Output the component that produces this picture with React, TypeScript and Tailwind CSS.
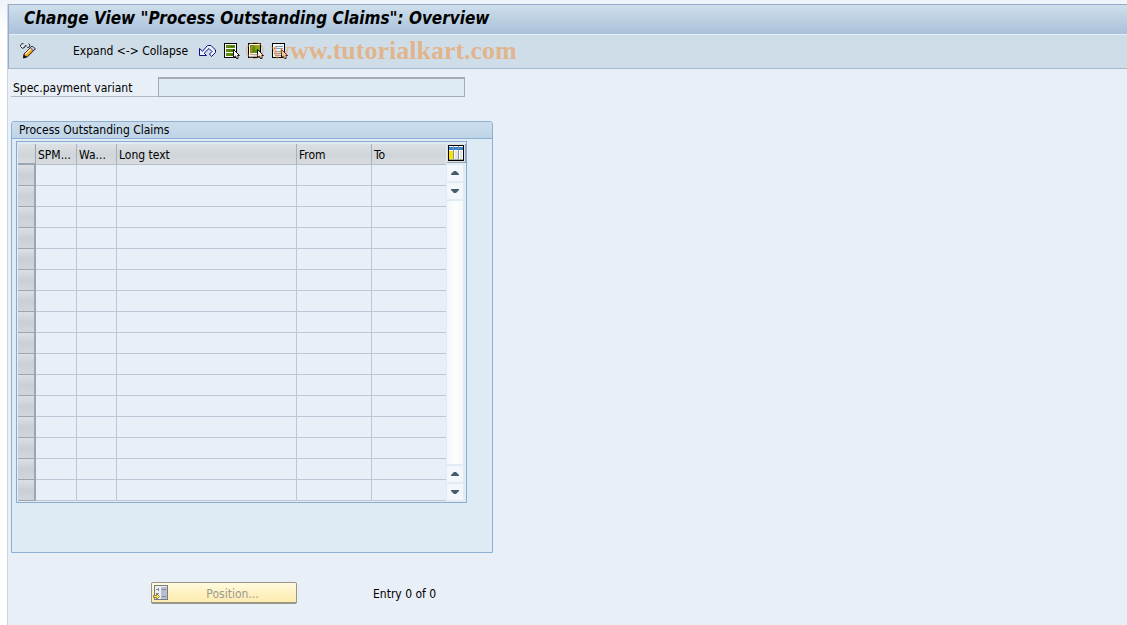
import type { ReactNode } from 'react';

const columns = [
  { label: 'SPM...', width: 'w-[41px]' },
  { label: 'Wa...', width: 'w-[40px]' },
  { label: 'Long text', width: 'w-[180px]' },
  { label: 'From', width: 'w-[75px]' },
  { label: 'To', width: 'w-[74px]' }
];

const rows = Array.from({ length: 16 }, (_, i) => i);

function Glyph({ children }: { children: ReactNode }) {
  return (
    <svg className="block size-4" viewBox="0 0 16 16" shapeRendering="crispEdges" aria-hidden="true">
      {children}
    </svg>
  );
}

function EditIcon() {
  return (
    <svg className="block size-4" viewBox="0 0 16 16" fill="none" aria-hidden="true">
      <path d="M.5 3.5V2L2 .7L3.5 .7M1 4L2.5 5.3L4.5 4.5L5 2.8L6.5 2.8L7.5 4.5L9.5 4L10 2L8.5 .7" stroke="#23282d" strokeWidth="1" />
      <path d="M1.5 3.5L3.5 2.5M6.5 3.8L8.5 2.5" stroke="#fff" />
      <path d="M4 11L11.5 3.5L15.2 6L7.5 13.7L3.5 15Z" fill="#f9a11b" stroke="#16161c" />
      <path d="M5.3 11.3L12 4.6" stroke="#ffe9b0" strokeWidth="1.6" />
      <path d="M10.3 4.7L12 3L15.3 5.6L13.2 7.7Z" fill="#c7cbe8" stroke="#25253a" strokeWidth=".8" />
      <path d="M4 11.8L6.8 14L3.2 15.2Z" fill="#111" />
    </svg>
  );
}

function UndoIcon() {
  return (
    <svg className="block h-4 w-[17px]" viewBox="0 0 17 16" fill="none" aria-hidden="true">
      <path
        d="M.5 5.5V12.5H7.5L5.2 10.2L10 5.5L13 8.5L10.5 11L12.5 13.5L16.5 9.5V7L12 2.5H8.5L3.5 8.3Z"
        fill="#eef3fb"
        stroke="#10108c"
        strokeWidth="1"
      />
    </svg>
  );
}

function Cursor() {
  return (
    <path
      d="M9.5 6.5V14.5L11.5 13L12.5 15.5H14V13.5L13.5 12.5H15.5Z"
      fill="#fff"
      stroke="#111"
      strokeWidth="1"
      shapeRendering="auto"
    />
  );
}

function SelectAllIcon() {
  return (
    <Glyph>
      <path d="M.5.5H12.5V14.5H.5Z" fill="#fff" stroke="#000" />
      <path d="M2 2H11V5H2ZM2 6H11V9H2ZM2 10H11V13H2Z" fill="#5c8a0a" />
      <path d="M7 3H10V4H7ZM7 7H10V8H7ZM7 11H10V12H7Z" fill="#3f6b00" />
      <Cursor />
    </Glyph>
  );
}

function SelectBlockIcon() {
  return (
    <Glyph>
      <path d="M.5.5H12.5V14.5H.5Z" fill="#fff" stroke="#000" />
      <path d="M2 2H12V10H2Z" fill="#5c8a0a" />
      <path d="M7 2H12V7H7Z" fill="#83a90f" />
      <path d="M2 11H9V12H2ZM2 13H9V14H2Z" fill="#9db2c4" />
      <Cursor />
    </Glyph>
  );
}

function DeselectIcon() {
  return (
    <Glyph>
      <path d="M.5.5H12.5V14.5H.5Z" fill="#f2f7fb" stroke="#000" />
      <path d="M3 3H11V4H3ZM2 5H11V6H2ZM3 8H11V9H3ZM2 10H9V11H2ZM3 12H9V13H3Z" fill="#7f9db5" />
      <Cursor />
    </Glyph>
  );
}

function ColumnsIcon() {
  return (
    <Glyph>
      <path d="M0 0H16V16H0Z" fill="#000" />
      <path d="M1 1H15V15H1Z" fill="#fff" />
      <path d="M1 2H15V5H1Z" fill="#3484c8" />
      <path d="M1 6H5V14H1Z" fill="#ffe100" />
      <path d="M5 1H6V15H5ZM10 1H11V15H10Z" fill="#8a939b" />
      <path d="M7 6H10V14H7ZM12 6H14V14H12Z" fill="#dfe4ea" />
      <path d="M1 14H15V15H1Z" fill="#a9a99b" />
    </Glyph>
  );
}

function PositionIcon() {
  return (
    <Glyph>
      <path d="M1.5.5H14.5V14.5H1.5Z" fill="#eceef0" stroke="#777b80" />
      <path d="M8 2H14V14H8Z" fill="#b9bed3" />
      <path d="M3 4H6V5H3ZM5 3H6V6H5ZM3 8H6V9H3ZM9 4H13V5H9ZM9 11H13V12H9Z" fill="#85888f" />
      <path d="M.5 10.5H3.5V8.5L6.5 11.5L3.5 14.5V12.5H.5Z" fill="#ffe94f" stroke="#8c8148" shapeRendering="auto" />
    </Glyph>
  );
}

function ScrollButton({ label, down }: { label: string; down?: boolean }) {
  return (
    <button type="button" aria-label={label} className="flex h-4 w-4 shrink-0 items-center justify-center bg-[#f3f7fb]">
      <svg className="block h-1 w-2" viewBox="0 0 8 4" aria-hidden="true">
        <path d={down ? 'M0 0H8V1L5 4H3L0 1Z' : 'M0 4H8V3L5 0H3L0 3Z'} fill="#485b6a" />
      </svg>
    </button>
  );
}

function Toolbar() {
  return (
    <div className="relative flex h-[34px] items-center border-b border-[#a5b7ce] bg-[#cfdde8] pb-0.5 pl-[11px]">
      <button type="button" aria-label="Display / change">
        <EditIcon />
      </button>
      <button type="button" className="ml-[37px] w-[126px] text-left whitespace-nowrap">
        Expand &lt;-&gt; Collapse
      </button>
      <div className="flex items-center gap-2">
        <button type="button" aria-label="Undo">
          <UndoIcon />
        </button>
        <button type="button" aria-label="Select all">
          <SelectAllIcon />
        </button>
        <button type="button" aria-label="Select block">
          <SelectBlockIcon />
        </button>
        <button type="button" aria-label="Deselect all">
          <DeselectIcon />
        </button>
      </div>
      <span className="pointer-events-none absolute top-0 left-[236px] font-['Liberation_Serif',serif] text-[26px] leading-8 font-bold whitespace-nowrap text-[#f0923c]/55">
        <span className="font-normal">©</span> www.tutorialkart.com
      </span>
    </div>
  );
}

function ClaimsTable() {
  return (
    <div className="flex w-fit border border-[#8aaad0] bg-[#e0ebf4] pt-0.5 pb-px pl-px">
      <table className="w-[428px] table-fixed border-separate border-spacing-0 bg-[#e8eff6]">
        <thead>
          <tr className="h-[21px] bg-linear-to-b from-[#dde1e5] via-[#d0d5da] to-[#d9dde1]">
            <th className="w-[18px] border-r border-b-2 border-[#9ba6b1] p-0" aria-label="Row selection" />
            {columns.map((column) => (
              <th
                key={column.label}
                className={`${column.width} border-r border-b border-r-[#a4b1be] border-b-[#b5bfca] p-0 pt-0.5 pl-0.5 text-left font-normal whitespace-nowrap last:border-r-0`}
              >
                {column.label}
              </th>
            ))}
          </tr>
        </thead>
        <tbody>
          {rows.map((row) => (
            <tr key={row} className="h-[21px]">
              <td className="border-r-2 border-b border-[#9ba6b1] bg-linear-to-b from-[#dce0e4] via-[#cacfd7] to-[#d2d6dc] p-0" />
              {columns.map((column) => (
                <td key={column.label} className="border-r border-b border-[#bdc7d6] p-0 last:border-r-0" />
              ))}
            </tr>
          ))}
        </tbody>
      </table>
      <div className="flex w-5 flex-col items-start gap-0.5 pb-px pl-px">
        <button type="button" aria-label="Configure columns" className="border-r border-b border-[#98a5b3] bg-[#dde1e5] p-px">
          <ColumnsIcon />
        </button>
        <ScrollButton label="Scroll up" />
        <ScrollButton label="Scroll down" down />
        <div className="w-4 flex-1 bg-linear-to-r from-[#f2f7fb] via-[#fdfefe] to-[#f6f8fa]" />
        <ScrollButton label="Previous row" />
        <ScrollButton label="Next row" down />
      </div>
    </div>
  );
}

export default function App() {
  return (
    <div className="flex min-h-screen flex-col bg-linear-to-b from-[#eef3f9] to-white to-5% pt-1 pl-[7px] font-['DejaVu_Sans_Condensed','DejaVu_Sans',sans-serif] text-[12px] leading-4 text-black">
      <div className="flex-1 border-l border-[#cbd6e2] bg-[#e8eff6]">
        <header className="border-t border-l border-[#94acc8]">
          <h1 className="h-[30px] border-b border-[#e6eff6] bg-linear-to-b from-[#cfdfec] to-[#a9c1d9] pl-[15px] text-[17px] leading-[27px] font-bold whitespace-nowrap italic">
            Change View "Process Outstanding Claims": Overview
          </h1>
          <Toolbar />
        </header>

        <main className="pl-[3px]">
          <div className="mt-2 flex h-5">
            <label htmlFor="variant" className="w-[147px] border-b border-[#b4b9bf] pt-[3px] pl-0.5">
              Spec.payment variant
            </label>
            <input
              id="variant"
              type="text"
              readOnly
              className="w-[307px] border border-t-2 border-[#a5abb1] bg-[#deebf4] px-1 outline-none"
            />
          </div>

          <section className="mt-6 w-[482px] rounded-t-[3px] border border-[#8db0d3] bg-[#deeaf4] pb-[49px]">
            <h2 className="h-[17px] rounded-t-[2px] border-b border-[#8db0d3] bg-linear-to-b from-[#cbddec] to-[#bfd4e8] pl-[7px]">
              Process Outstanding Claims
            </h2>
            <div className="pt-0.5 pl-1">
              <ClaimsTable />
            </div>
          </section>

          <div className="mt-[29px] flex items-center pl-[140px]">
            <button
              type="button"
              disabled
              className="flex h-[22px] w-[146px] items-center rounded-[2px] border border-b-2 border-[#9a9687] bg-linear-to-b from-[#fffbe0] via-[#fff2c2] to-[#fdecb0] pl-px text-[#9b9a94]"
            >
              <PositionIcon />
              <span className="flex-1 pt-0.5 text-center">Position...</span>
            </button>
            <span className="ml-[76px] pt-0.5">Entry 0 of 0</span>
          </div>
        </main>
      </div>
    </div>
  );
}
